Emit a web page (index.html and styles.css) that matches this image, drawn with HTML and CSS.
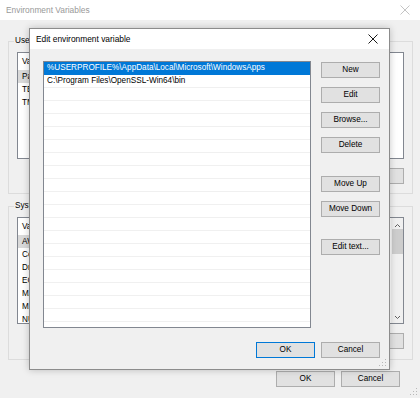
FILE: index.html
```html
<!DOCTYPE html>
<html lang="en">
<head>
  <meta charset="UTF-8" />
  <title>Edit environment variable</title>
  <link rel="stylesheet" href="styles.css">
</head>
<body>
  <!-- Background window (inactive) -->
  <div class="window">
    <div class="titlebar">
      <span class="title">Environment Variables</span>
      <svg class="close dim" width="10" height="10" viewBox="0 0 10 10"><path d="M0.5 0.5 L9.5 9.5 M9.5 0.5 L0.5 9.5" stroke="#c4c4c4" stroke-width="1"/></svg>
    </div>
    <div class="window-body">
      <div class="group">
        <span class="group-label">User variables for user</span>
        <div class="listbox">
          <div class="lb-main">
            <div class="lb-head">Variable</div>
            <div class="lb-row sel">Path</div>
            <div class="lb-row">TEMP</div>
            <div class="lb-row">TMP</div>
          </div>
        </div>
        <div class="btn-row">
          <button class="btn">New...</button>
          <button class="btn">Edit...</button>
          <button class="btn">Delete</button>
        </div>
      </div>
      <div class="group sys">
        <span class="group-label">System variables</span>
        <div class="listbox">
          <div class="lb-main">
            <div class="lb-head">Variable</div>
            <div class="lb-row sel">AWS_HOME</div>
            <div class="lb-row">ComSpec</div>
            <div class="lb-row">DriverData</div>
            <div class="lb-row">ECLIPSE_HOME</div>
            <div class="lb-row">MAVEN_HOME</div>
            <div class="lb-row">M2_HOME</div>
            <div class="lb-row">NUMBER_OF_PROCESSORS</div>
          </div>
          <div class="scrollbar">
            <svg width="11" height="7" viewBox="0 0 11 7"><path d="M3 5 L5.5 2.5 L8 5" fill="none" stroke="#606060" stroke-width="1"/></svg>
            <div class="thumb"></div>
            <div class="track"></div>
            <svg width="11" height="7" viewBox="0 0 11 7"><path d="M3 2 L5.5 4.5 L8 2" fill="none" stroke="#606060" stroke-width="1"/></svg>
          </div>
        </div>
        <div class="btn-row">
          <button class="btn">New...</button>
          <button class="btn">Edit...</button>
          <button class="btn">Delete</button>
        </div>
      </div>
      <div class="footer">
        <button class="btn">OK</button>
        <button class="btn">Cancel</button>
      </div>
    </div>
    <svg class="grip" width="8" height="8" viewBox="0 0 8 8" fill="#b8b8b8"><rect x="6" y="0" width="1" height="1"/><rect x="3" y="3" width="1" height="1"/><rect x="6" y="3" width="1" height="1"/><rect x="0" y="6" width="1" height="1"/><rect x="3" y="6" width="1" height="1"/><rect x="6" y="6" width="1" height="1"/></svg>
  </div>

  <!-- Active dialog -->
  <div class="dialog">
    <div class="titlebar active">
      <span class="title">Edit environment variable</span>
      <svg class="close" width="10" height="10" viewBox="0 0 10 10"><path d="M0.5 0.5 L9.5 9.5 M9.5 0.5 L0.5 9.5" stroke="#1a1a1a" stroke-width="1"/></svg>
    </div>
    <div class="dialog-body">
      <div class="dialog-main">
        <div class="path-list">
          <div class="path-row selected">%USERPROFILE%\AppData\Local\Microsoft\WindowsApps</div>
          <div class="path-row">C:\Program Files\OpenSSL-Win64\bin</div>
          <div class="path-row"></div>
          <div class="path-row"></div>
          <div class="path-row"></div>
          <div class="path-row"></div>
          <div class="path-row"></div>
          <div class="path-row"></div>
          <div class="path-row"></div>
          <div class="path-row"></div>
          <div class="path-row"></div>
          <div class="path-row"></div>
          <div class="path-row"></div>
          <div class="path-row"></div>
          <div class="path-row"></div>
          <div class="path-row"></div>
          <div class="path-row"></div>
          <div class="path-row"></div>
          <div class="path-row"></div>
          <div class="path-row"></div>
        </div>
        <div class="side-buttons">
          <button class="btn">New</button>
          <button class="btn">Edit</button>
          <button class="btn">Browse...</button>
          <button class="btn">Delete</button>
          <button class="btn spaced">Move Up</button>
          <button class="btn">Move Down</button>
          <button class="btn spaced-sm">Edit text...</button>
        </div>
      </div>
      <div class="footer">
        <button class="btn default">OK</button>
        <button class="btn">Cancel</button>
      </div>
    </div>
    <svg class="grip" width="8" height="8" viewBox="0 0 8 8" fill="#b8b8b8"><rect x="6" y="0" width="1" height="1"/><rect x="3" y="3" width="1" height="1"/><rect x="6" y="3" width="1" height="1"/><rect x="0" y="6" width="1" height="1"/><rect x="3" y="6" width="1" height="1"/><rect x="6" y="6" width="1" height="1"/></svg>
  </div>
</body>
</html>
```

FILE: styles.css
```css
/* Global */
* {
  box-sizing: border-box;
}
body {
  margin: 0;
  width: 420px;
  height: 398px;
  overflow: hidden;
  font-family: 'Liberation Sans', Arial, sans-serif;
  font-size: 8.2px;
  color: #000;
  background: #f0f0f0;
}
button {
  font: inherit;
  color: #000;
}
/* Title bars */
.titlebar {
  display: flex;
  align-items: center;
  justify-content: space-between;
  height: 20px;
  background: #fff;
  padding: 0 12px 0 6px;
}
.titlebar .title {
  color: #999;
  font-size: 8.4px;
}
.titlebar.active .title {
  color: #000;
}
.close.dim {
  margin-right: -2px;
}
/* Background window */
.window {
  position: relative;
  width: 420px;
  height: 398px;
}
.window-body {
  padding: 21px 7px 0 8px;
}
.group {
  position: relative;
  border: 1px solid #dcdcdc;
  padding: 10px 8px 9px 8px;
  width: 405px;
}
.group.sys {
  margin-top: 12px;
  padding-bottom: 10px;
}
/* the dialog covers everything past x=29, so the label is cut there */
.group-label {
  position: absolute;
  top: -6px;
  left: 5px;
  width: 16px;
  padding: 0 1px;
  background: #f0f0f0;
  line-height: 10px;
  white-space: nowrap;
  overflow: hidden;
}
.listbox {
  display: flex;
  height: 107px;
  background: #fff;
  border: 1px solid #828790;
  overflow: hidden;
}
.lb-main {
  flex: 1;
}
.lb-head,
.lb-row {
  width: 24px;
  padding-left: 4px;
  white-space: nowrap;
  overflow: hidden;
}
.lb-head {
  height: 17px;
  line-height: 17px;
}
.lb-row {
  height: 13px;
  line-height: 13px;
}
.lb-row.sel {
  background: #d9d9d9;
}
.scrollbar {
  width: 12px;
  display: flex;
  flex-direction: column;
  align-items: center;
  background: #f0f0f0;
  padding: 4px 0 2px;
}
.scrollbar .thumb {
  width: 11px;
  height: 25px;
  background: #cdcdcd;
}
.scrollbar .track {
  flex: 1;
}
.btn-row {
  display: flex;
  justify-content: flex-end;
  gap: 7px;
  margin-top: 9px;
}
.btn {
  width: 59px;
  height: 16px;
  padding: 0;
  background: #e1e1e1;
  border: 1px solid #adadad;
  line-height: 14px;
  text-align: center;
}
.footer {
  display: flex;
  justify-content: flex-end;
  gap: 6px;
}
.window-body > .footer {
  margin-top: 11px;
  padding-right: 13px;
}
.grip {
  position: absolute;
  right: 2px;
  bottom: 2px;
}
/* Active dialog */
.dialog {
  position: absolute;
  left: 29px;
  top: 28px;
  width: 361px;
  height: 342px;
  background: #f0f0f0;
  border: 1px solid #8c8c8c;
  box-shadow: 0 0 7px rgba(0, 0, 0, 0.22);
}
.dialog .close {
  margin-right: -1px;
}
.dialog-body {
  padding: 12px 9px 11px 13px;
}
.dialog-main {
  display: flex;
  gap: 10px;
}
.path-list {
  width: 268px;
  height: 267px;
  background: #fff;
  border: 1px solid #828790;
  overflow: hidden;
}
.path-row {
  height: 13px;
  line-height: 12px;
  padding-left: 3px;
  border-bottom: 1px solid #f0f0f0;
  white-space: nowrap;
}
.path-row.selected {
  background: #0078d7;
  color: #fff;
  border-bottom-color: #0078d7;
}
.side-buttons {
  display: flex;
  flex-direction: column;
  gap: 9px;
  padding-top: 1px;
}
.side-buttons .spaced {
  margin-top: 14px;
}
.side-buttons .spaced-sm {
  margin-top: 13px;
}
.dialog-body > .footer {
  margin-top: 14px;
}
.btn.default {
  border-color: #0078d7;
}
```
